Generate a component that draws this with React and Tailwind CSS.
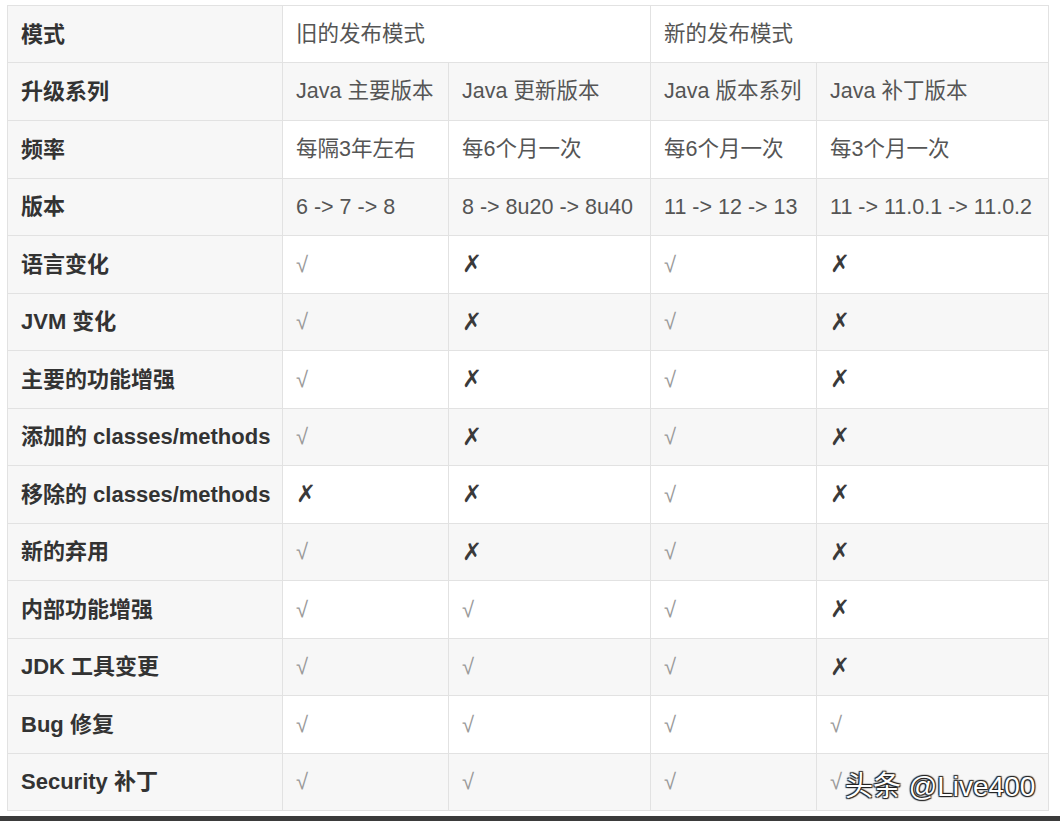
import React from 'react'

const Y = '√'
const N = '✗'

const rows = [
  ['频率', '每隔3年左右', '每6个月一次', '每6个月一次', '每3个月一次'],
  ['版本', '6 -> 7 -> 8', '8 -> 8u20 -> 8u40', '11 -> 12 -> 13', '11 -> 11.0.1 -> 11.0.2'],
  ['语言变化', Y, N, Y, N],
  ['JVM 变化', Y, N, Y, N],
  ['主要的功能增强', Y, N, Y, N],
  ['添加的 classes/methods', Y, N, Y, N],
  ['移除的 classes/methods', N, N, Y, N],
  ['新的弃用', Y, N, Y, N],
  ['内部功能增强', Y, Y, Y, N],
  ['JDK 工具变更', Y, Y, Y, N],
  ['Bug 修复', Y, Y, Y, Y],
  ['Security 补丁', Y, Y, Y, Y],
]

const Cell = ({ value }) => {
  if (value === Y) {
    return <span className="text-[#9a9a9a] text-[22px] font-light">√</span>
  }
  if (value === N) {
    return (
      <span className="text-[#3a3a3a] text-[24px] font-bold" style={{ fontFamily: '"DejaVu Sans", sans-serif' }}>
        ✗
      </span>
    )
  }
  return <span>{value}</span>
}

const App = () => {
  return (
    <div
      className="w-[1060px] h-[821px] bg-white flex flex-col overflow-hidden"
      style={{ fontFamily: '"Liberation Sans", "Noto Sans CJK SC", sans-serif' }}
    >
      <div className="pt-[5px] pl-[7px]">
        <table className="table-fixed border-collapse w-[1041px] text-[21.5px] text-[#555]">
          <colgroup>
            <col className="w-[275px]" />
            <col className="w-[166px]" />
            <col className="w-[202px]" />
            <col className="w-[166px]" />
            <col className="w-[232px]" />
          </colgroup>
          <tbody>
            <tr className="h-[57px] bg-white">
              <th className="border border-[#e2e2e2] bg-[#f7f7f7] px-[13px] text-left text-[22px] font-bold text-[#333]">模式</th>
              <td colSpan={2} className="border border-[#e2e2e2] px-[13px]">旧的发布模式</td>
              <td colSpan={2} className="border border-[#e2e2e2] px-[13px]">新的发布模式</td>
            </tr>
            <tr className="h-[58px] bg-[#f7f7f7]">
              <th className="border border-[#e2e2e2] bg-[#f7f7f7] px-[13px] text-left text-[22px] font-bold text-[#333]">升级系列</th>
              <td className="border border-[#e2e2e2] px-[13px] whitespace-nowrap">Java 主要版本</td>
              <td className="border border-[#e2e2e2] px-[13px] whitespace-nowrap">Java 更新版本</td>
              <td className="border border-[#e2e2e2] px-[13px] whitespace-nowrap">Java 版本系列</td>
              <td className="border border-[#e2e2e2] px-[13px] whitespace-nowrap">Java 补丁版本</td>
            </tr>
            {rows.map((r, i) => (
              <tr key={r[0]} className={i % 2 === 0 ? 'h-[57.5px] bg-white' : 'h-[57.5px] bg-[#f7f7f7]'}>
                <th className="border border-[#e2e2e2] bg-[#f7f7f7] px-[13px] text-left text-[22px] font-bold text-[#333] whitespace-nowrap">
                  {r[0]}
                </th>
                {r.slice(1).map((v, j) => (
                  <td
                    key={j}
                    className={
                      j === 3 && i === rows.length - 1
                        ? 'relative border border-[#e2e2e2] px-[13px] whitespace-nowrap'
                        : 'border border-[#e2e2e2] px-[13px] whitespace-nowrap'
                    }
                  >
                    <Cell value={v} />
                    {j === 3 && i === rows.length - 1 && (
                      <span
                        className="absolute left-[28px] top-[12px] text-[28px] text-white whitespace-nowrap"
                        style={{
                          textShadow:
                            '1px 1px 1px #222, -1px -1px 1px #222, 1px -1px 1px #222, -1px 1px 1px #222',
                        }}
                      >
                        头条 @Live400
                      </span>
                    )}
                  </td>
                ))}
              </tr>
            ))}
          </tbody>
        </table>
      </div>
      <div className="flex-1" />
      <div className="h-[5px] bg-[#3b3b3b]" />
    </div>
  )
}

export default App
